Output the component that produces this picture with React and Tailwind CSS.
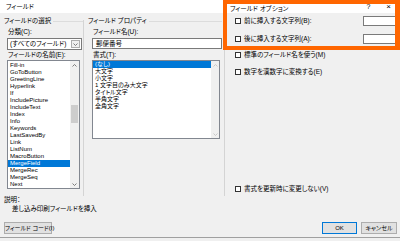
import React from 'react';

const FONT = "font-['Liberation_Sans','Noto_Sans_CJK_JP',sans-serif] [font-feature-settings:'palt']";

const fieldNames = [
    'Fill-in', 'GoToButton', 'GreetingLine', 'Hyperlink', 'If', 'IncludePicture',
    'IncludeText', 'Index', 'Info', 'Keywords', 'LastSavedBy', 'Link', 'ListNum',
    'MacroButton', 'MergeField', 'MergeRec', 'MergeSeq', 'Next',
];

const formats = ['(なし)', '大文字', '小文字', '1 文字目のみ大文字', 'タイトル文字', '半角文字', '全角文字'];

function Chevron({ up = false, color = '#606060' }) {
    return (
        <svg width="5" height="3" viewBox="0 0 5 3" className="block">
            <path d={up ? 'M0.5 2.5 L2.5 0.5 L4.5 2.5' : 'M0.5 0.5 L2.5 2.5 L4.5 0.5'} fill="none" stroke={color} strokeWidth="0.8" />
        </svg>
    );
}

function Heading({ text, line = true }) {
    return (
        <div className="flex items-center h-[8px]">
            <span className="leading-[8px] whitespace-nowrap">{text}</span>
            {line && <span className="flex-1 h-px bg-[#dcdcdc] ml-[2px]" />}
        </div>
    );
}

function Check({ label }) {
    return (
        <div className="flex items-center h-[8px]">
            <span className="w-[6px] h-[6px] border border-[#333] bg-white shrink-0" />
            <span className="ml-[3px] leading-[8px] whitespace-nowrap">{label}</span>
        </div>
    );
}

export default function App() {
    return (
        <div className={`w-[400px] h-[241px] overflow-hidden bg-[#f0f0f0] text-[6.5px] text-black ${FONT}`}>
            {/* タイトルバー */}
            <div className="h-[13px] bg-white flex items-center pl-[6px] pr-[9px]">
                <span className="leading-[13px]">フィールド</span>
                <span className="ml-auto leading-[13px] text-[7px]">?</span>
                <span className="ml-[16px] leading-[13px] text-[8px]">×</span>
            </div>

            <div className="h-[225px] border-b border-[#a0a0a0] flex flex-col">
                <div className="h-[183px] flex">
                    {/* フィールドの選択 */}
                    <div className="w-[83px] flex flex-col pt-[4px]">
                        <div className="pl-[4px]"><Heading text="フィールドの選択" /></div>
                        <div className="pl-[8px] mt-[3px] leading-[8px] h-[8px]">分類(C):</div>
                        <div className="ml-[7px] mt-[2px] w-[75px] h-[12px] bg-white border border-[#7a7a7a] flex items-center">
                            <span className="pl-[2px] leading-[10px] whitespace-nowrap">(すべてのフィールド)</span>
                            <span className="ml-auto mr-px w-[9px] h-[8px] border border-[#adadad] bg-[#f0f0f0] flex items-center justify-center">
                                <Chevron />
                            </span>
                        </div>
                        <div className="pl-[8px] mt-[1px] leading-[8px] h-[8px]">フィールドの名前(E):</div>
                        <div className="ml-[7px] mt-[1px] w-[73px] h-[129px] bg-white border border-[#828790] flex text-[6px]">
                            <div className="flex-1 pt-px">
                                {fieldNames.map((name) => (
                                    <div
                                        key={name}
                                        className={`h-[7px] leading-[7px] pl-[2px] whitespace-nowrap ${name === 'MergeField' ? 'bg-[#0078d7] text-white' : ''}`}
                                    >
                                        {name}
                                    </div>
                                ))}
                            </div>
                            <div className="w-[9px] bg-[#f0f0f0] flex flex-col items-center">
                                <div className="h-[8px] flex items-center"><Chevron up /></div>
                                <div className="mt-[36px] w-[7px] h-[18px] bg-[#cdcdcd]" />
                                <div className="mt-auto h-[8px] flex items-center"><Chevron /></div>
                            </div>
                        </div>
                    </div>

                    <div className="w-px bg-[#d4d4d4] mt-[7px]" />

                    {/* フィールド プロパティ */}
                    <div className="w-[139px] flex flex-col pt-[4px]">
                        <div className="pl-[4px] pr-[1px]"><Heading text="フィールド プロパティ" /></div>
                        <div className="pl-[9px] mt-[3px] leading-[8px] h-[8px]">フィールド名(U):</div>
                        <div className="ml-[8px] mt-[2px] w-[130px] h-[11px] bg-white border border-[#7a7a7a] flex items-center pl-[3px]">
                            <span className="leading-[9px]">郵便番号</span>
                        </div>
                        <div className="pl-[9px] mt-[2px] leading-[8px] h-[8px]">書式(T):</div>
                        <div className="ml-[8px] mt-[1px] w-[128px] h-[79px] bg-white border border-[#828790] flex text-[6px]">
                            <div className="flex-1">
                                {formats.map((f, i) => (
                                    <div
                                        key={f}
                                        className={`h-[7px] leading-[7px] pl-[2px] whitespace-nowrap ${i === 0 ? 'bg-[#0078d7] text-white' : ''}`}
                                    >
                                        {f}
                                    </div>
                                ))}
                            </div>
                            <div className="w-[8px] bg-[#f0f0f0] flex flex-col items-center">
                                <div className="h-[8px] flex items-center"><Chevron up color="#bfbfbf" /></div>
                                <div className="mt-auto h-[8px] flex items-center"><Chevron color="#bfbfbf" /></div>
                            </div>
                        </div>
                    </div>

                    {/* フィールド オプション */}
                    <div className="flex-1 flex flex-col -mt-[13px]">
                        <div className="h-[50px] border-[4px] border-r-[5px] border-[#ff6600] flex flex-col">
                            <div className="pl-[3px] mt-px"><Heading text="フィールド オプション" line={false} /></div>
                            <div className="mt-[3px] h-[10px] flex items-center pl-[8px]">
                                <Check label="前に挿入する文字列(B):" />
                                <span className="ml-auto w-[32px] h-[10px] bg-white border border-r-0 border-[#7a7a7a]" />
                            </div>
                            <div className="mt-[8px] h-[10px] flex items-center pl-[8px]">
                                <Check label="後に挿入する文字列(A):" />
                                <span className="ml-auto w-[32px] h-[10px] bg-white border border-r-0 border-[#7a7a7a]" />
                            </div>
                        </div>
                        <div className="ml-px flex-1 border-l border-[#d4d4d4] pl-[10px] pb-[3px] flex flex-col">
                            <div className="mt-px"><Check label="標準のフィールド名を使う(M)" /></div>
                            <div className="mt-[9px]"><Check label="数字を漢数字に変換する(E)" /></div>
                            <div className="mt-auto"><Check label="書式を更新時に変更しない(V)" /></div>
                        </div>
                    </div>
                </div>

                {/* 説明 */}
                <div className="pl-[4px] h-[7px] leading-[7px]">説明：</div>
                <div className="pl-[12px] mt-[2px] h-[7px] leading-[7px]">差し込み印刷フィールドを挿入</div>

                <div className="mt-[10px] h-[12px] flex items-center px-[4px] text-[6px]">
                    <button className="w-[48px] h-[12px] border border-[#adadad] bg-[#e1e1e1] leading-[10px] whitespace-nowrap px-0">
                        フィールド コード(I)
                    </button>
                    <button className="ml-auto w-[35px] h-[12px] border border-[#0078d7] bg-[#e1e1e1] leading-[10px]">OK</button>
                    <button className="ml-[4px] mr-[-1px] w-[36px] h-[12px] border border-[#adadad] bg-[#e1e1e1] leading-[10px]">キャンセル</button>
                </div>
            </div>
        </div>
    );
}
